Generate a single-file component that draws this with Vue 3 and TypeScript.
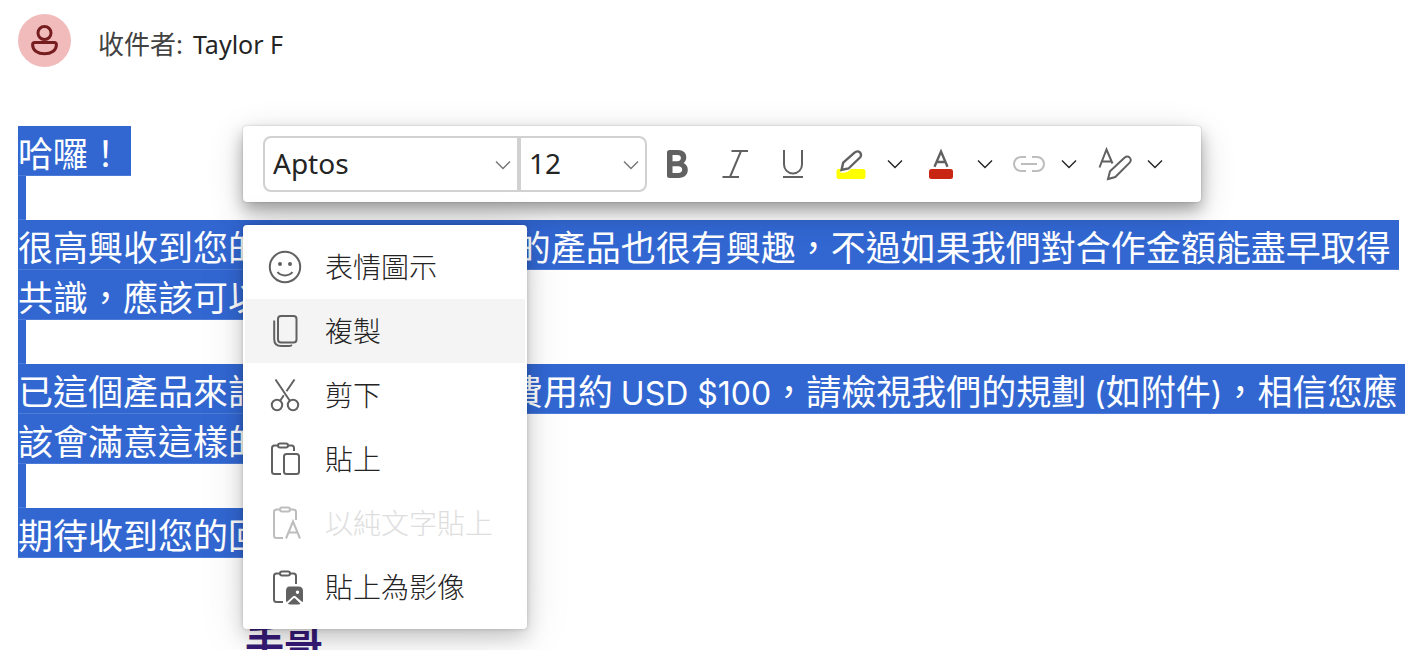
<script setup lang="ts">
import { ref } from 'vue'

interface Run {
  text: string
  latin?: boolean
}

interface MenuEntry {
  icon: string
  label: string
  disabled?: boolean
}

const fontName = ref<string>('Aptos')
const fontSize = ref<string>('12')
const hovered = ref<string>('複製')

const lines: Run[][] = [
  [{ text: '哈囉！ ' }],
  [],
  [{ text: '很高興收到您的來信， 您對我們的產品也很有興趣，不過如果我們對合作金額能盡早取得 ' }],
  [{ text: '共識，應該可以加快合作。 ' }],
  [],
  [
    { text: '已這個產品來討論，每個月的總費用約 ' },
    { text: 'USD $100', latin: true },
    { text: '，請檢視我們的規劃 ' },
    { text: '(', latin: true },
    { text: '如附件' },
    { text: ')', latin: true },
    { text: '，相信您應 ' },
  ],
  [{ text: '該會滿意這樣的安排。 ' }],
  [],
  [{ text: '期待收到您的回覆。 ' }],
]

const entries: MenuEntry[] = [
  { icon: 'emoji', label: '表情圖示' },
  { icon: 'copy', label: '複製' },
  { icon: 'cut', label: '剪下' },
  { icon: 'paste', label: '貼上' },
  { icon: 'text', label: '以純文字貼上', disabled: true },
  { icon: 'image', label: '貼上為影像' },
]
</script>

<template>
  <main class="compose" lang="zh-Hant">
    <header class="recipients">
      <span class="avatar">
        <svg viewBox="0 0 53 53" aria-hidden="true">
          <circle cx="26.5" cy="19" r="6.5" />
          <path d="M16.800 28.500h19.400q2.200 0 2.200 2.200c0 6-5.600 9-11.900 9s-11.900-3-11.900-9q0-2.200 2.200-2.200z" />
        </svg>
      </span>
      <span class="to">收件者:</span>
      <span class="name">Taylor F</span>
    </header>

    <section class="message">
      <p v-for="(line, i) in lines" :key="i" class="line" :class="{ empty: !line.length }">
        <span v-for="(run, j) in line" :key="j" :class="{ latin: run.latin }">{{ run.text }}</span>
      </p>
    </section>
    <p class="signature">手哥</p>

    <div class="toolbar" role="toolbar" aria-label="格式">
      <label class="field family">
        <select v-model="fontName" aria-label="字型">
          <option>Aptos</option>
          <option>Arial</option>
        </select>
        <svg class="chevron" viewBox="0 0 16 10" aria-hidden="true"><path d="M1 1.500l7 7 7-7" /></svg>
      </label>
      <label class="field size">
        <select v-model="fontSize" aria-label="字型大小">
          <option>12</option>
          <option>14</option>
        </select>
        <svg class="chevron" viewBox="0 0 16 10" aria-hidden="true"><path d="M1 1.500l7 7 7-7" /></svg>
      </label>

      <button class="tool" type="button" aria-label="粗體">
        <svg viewBox="0 0 36 36" aria-hidden="true">
          <path class="fill" fill-rule="evenodd" d="M10.500 4H19c5.200 0 8.300 3 8.300 7.300 0 2.400-1 4.500-2.700 5.700 2.700 1.300 4.200 3.700 4.200 6.800 0 5-3.600 8.200-9 8.200h-9.300Q8 32 8 29.500v-23Q8 4 10.500 4zM13.500 9v6.300h5c2.200 0 3.400-1.200 3.400-3.200S20.700 9 18.500 9zM13.500 20.200V27h5.800c2.500 0 3.900-1.300 3.900-3.400s-1.400-3.400-3.900-3.400z" />
        </svg>
      </button>
      <button class="tool" type="button" aria-label="斜體">
        <svg viewBox="0 0 36 36" aria-hidden="true"><path d="M14.500 5H31M5.500 31H22M24 5L13 31" /></svg>
      </button>
      <button class="tool" type="button" aria-label="底線">
        <svg viewBox="0 0 36 36" aria-hidden="true"><path d="M9 4v14.500a9 9 0 0 0 18 0V4M8 31h20" /></svg>
      </button>
      <span class="split">
        <button class="tool" type="button" aria-label="醒目提示色彩">
          <svg viewBox="0 0 36 36" aria-hidden="true">
            <path class="yellow" d="M5.500 23H8l-1 3.500c5 1 8-.3 11-3.500h12q2.500 0 2.500 2.500v5q0 2.500-2.500 2.500H6q-2.500 0-2.500-2.500V25q0-2 2-2z" />
            <path class="thick" d="M8.500 24l1.700-7.300L21.800 6.500a3.600 3.600 0 0 1 5.200 5L15.500 22.500z" />
          </svg>
        </button>
        <button class="more" type="button" aria-label="更多醒目提示色彩">
          <svg class="chevron" viewBox="0 0 16 10" aria-hidden="true"><path d="M1 1.500l7 7 7-7" /></svg>
        </button>
      </span>
      <span class="split color">
        <button class="tool" type="button" aria-label="字型色彩">
          <svg viewBox="0 0 36 36" aria-hidden="true">
            <path class="thick" d="M11.500 20.800L18 5.500l6.500 15.300M13.600 16h8.800" />
            <rect class="red" x="6" y="23" width="24" height="10" rx="2.500" />
          </svg>
        </button>
        <button class="more" type="button" aria-label="更多字型色彩">
          <svg class="chevron" viewBox="0 0 16 10" aria-hidden="true"><path d="M1 1.500l7 7 7-7" /></svg>
        </button>
      </span>
      <span class="split link">
        <button class="tool" type="button" disabled aria-label="插入連結">
          <svg viewBox="0 0 36 36" aria-hidden="true">
            <path d="M15 11h-5a7 7 0 0 0 0 14h5M21 11h5a7 7 0 0 1 0 14h-5M10 18h16" />
          </svg>
        </button>
        <button class="more" type="button" aria-label="連結選項">
          <svg class="chevron" viewBox="0 0 16 10" aria-hidden="true"><path d="M1 1.500l7 7 7-7" /></svg>
        </button>
      </span>
      <span class="split styles">
        <button class="tool" type="button" aria-label="樣式">
          <svg viewBox="0 0 36 36" aria-hidden="true">
            <path d="M2.500 21.500L9.500 3.500l6 14M4.700 15.500h9.500M11 33l2-7.800L27.700 11.600a3.500 3.500 0 0 1 5 5L18.300 31z" />
          </svg>
        </button>
        <button class="more" type="button" aria-label="更多樣式">
          <svg class="chevron" viewBox="0 0 16 10" aria-hidden="true"><path d="M1 1.500l7 7 7-7" /></svg>
        </button>
      </span>
    </div>

    <div class="menu" role="menu">
      <button
        v-for="entry in entries"
        :key="entry.label"
        class="entry"
        :class="{ active: hovered === entry.label }"
        type="button"
        role="menuitem"
        :disabled="entry.disabled"
        @mouseenter="hovered = entry.label"
      >
        <svg viewBox="0 0 36 36" aria-hidden="true">
          <template v-if="entry.icon === 'emoji'">
            <circle cx="18" cy="18" r="15.200" />
            <circle class="fill" cx="13" cy="15" r="2" />
            <circle class="fill" cx="23" cy="15" r="2" />
            <path d="M10.500 23c3.500 4.500 11.500 4.500 15 0" />
          </template>
          <template v-else-if="entry.icon === 'copy'">
            <rect x="11" y="3" width="18.500" height="26.500" rx="3" />
            <path d="M7.200 7.500V26q0 7 7 7h7.300q2 0 3.500-1" />
          </template>
          <template v-else-if="entry.icon === 'cut'">
            <circle cx="10" cy="28" r="5.200" />
            <circle cx="26" cy="28" r="5.200" />
            <path d="M8.500 2.500l14.500 21.500M13 24l3.800-5.800M19.500 14.300L27.500 2.500" />
          </template>
          <template v-else-if="entry.icon === 'paste'">
            <rect x="11" y="2.500" width="10" height="4" rx="2" />
            <rect x="17" y="13" width="15" height="20" rx="2.500" />
            <path d="M11 4.500H7.500Q5 4.500 5 7v23.500Q5 33 7.500 33H14M21 4.500h3.500Q27 4.500 27 7v3" />
          </template>
          <template v-else-if="entry.icon === 'text'">
            <rect x="13" y="2.500" width="10" height="4" rx="2" />
            <path d="M13 4.500H9.500Q7 4.500 7 7v23.500Q7 33 9.500 33H16M23 4.500h3.500Q29 4.500 29 7v8M19 33.500l7-17 7 17M21.500 27.500h9" />
          </template>
          <template v-else>
            <rect x="13" y="2.500" width="10" height="4" rx="2" />
            <path d="M13 4.500H9.500Q7 4.500 7 7v23.500Q7 33 9.500 33H16M23 4.500h3.500Q29 4.500 29 7v8" />
            <path class="fill" fill-rule="evenodd" d="M22.500 17.500h9q4.500 0 4.500 4.500v9q0 1.300-.5 2.200l-7-6q-1.200-1-2.400 0l-6.500 6q-.6-1-.6-2.200v-9q0-4.500 3.500-4.500zM30.500 21.500a1.700 1.700 0 1 0 .01 0z" />
            <path class="fill" d="M20.800 34.800l5.900-5.500q.6-.5 1.200 0l5.700 5.500q-1 .7-2.200.7h-8.400q-1 0-2.200-.7z" />
          </template>
        </svg>
        <span>{{ entry.label }}</span>
      </button>
    </div>
  </main>
</template>

<style>
body {
  margin: 0;
  background: #fff;
  overflow: hidden;
}
</style>

<style scoped>
.compose {
  position: relative;
  height: 100vh;
  box-sizing: border-box;
  overflow: hidden;
  padding: 14px 18px 0;
  background: #fff;
  font-family: 'Noto Sans', 'Noto Sans CJK TC', sans-serif;
  color: #242424;
}

svg {
  display: block;
  fill: none;
  stroke: currentColor;
  stroke-width: 2;
}

svg .fill {
  fill: currentColor;
  stroke: none;
}

svg .thick {
  stroke-width: 2.4;
}

.recipients {
  display: flex;
  align-items: center;
  height: 53px;
  margin-bottom: 59px;
  font-size: 26px;
  line-height: 36px;
}

.avatar {
  width: 53px;
  height: 53px;
  margin-right: 27px;
  border-radius: 50%;
  background: #f1bbbc;
  color: #751d1f;
}

.avatar svg {
  stroke-width: 3;
}

.to,
.name {
  margin-top: 6px;
}

.to {
  margin-right: 10px;
  color: #424242;
}

.name {
  font-size: 25px;
}

.message {
  font-family: 'Noto Sans CJK TC', sans-serif;
  font-size: 35px;
  color: #fff;
}

.line {
  width: fit-content;
  height: 50px;
  margin: 0;
  border-bottom: 1px solid #4d7cd8;
  box-sizing: border-box;
  background: #3267d2;
  line-height: 51px;
  white-space: pre;
}

.line.empty {
  width: 8px;
  height: 44px;
}

.latin {
  font-family: Inter, sans-serif;
  font-size: 32px;
}

.signature {
  margin: 62px 0 0 227px;
  font-family: 'Noto Sans CJK TC', sans-serif;
  font-size: 39px;
  font-weight: 700;
  line-height: 40px;
  color: #371a78;
}

.toolbar {
  position: absolute;
  top: 126px;
  left: 243px;
  display: flex;
  align-items: center;
  box-sizing: border-box;
  height: 76px;
  padding: 0 18px 0 20px;
  border-radius: 4px;
  background: #fff;
  box-shadow: 0 0 2px rgba(0, 0, 0, 0.24), 0 8px 16px rgba(0, 0, 0, 0.3), 0 10px 36px rgba(0, 0, 0, 0.16);
  color: #616161;
}

.field {
  position: relative;
  display: block;
  height: 56px;
}

.family {
  width: 256px;
}

.size {
  width: 128px;
  margin-right: 12px;
}

.field select {
  width: 100%;
  height: 100%;
  padding: 0 8px 2px;
  border: 2px solid #d1d1d1;
  border-radius: 8px 0 0 8px;
  outline: none;
  appearance: none;
  background: #fff;
  color: #242424;
  font-family: 'Noto Sans', sans-serif;
  font-size: 28px;
}

.size select {
  border-radius: 0 8px 8px 0;
}

.chevron {
  width: 16px;
  height: 10px;
  stroke-width: 1.4;
}

.field .chevron {
  position: absolute;
  top: 24px;
  right: 8px;
  color: #757575;
  pointer-events: none;
}

.tool,
.more {
  display: grid;
  place-items: center;
  height: 56px;
  padding: 0;
  border: 0;
  background: none;
  color: inherit;
}

.tool {
  width: 36px;
  margin-right: 22px;
}

.tool svg {
  width: 36px;
  height: 36px;
}

.split {
  display: flex;
  margin-right: 18px;
}

.split .tool {
  margin-right: 16px;
}

.more {
  width: 20px;
  color: #242424;
}

.split.color {
  margin-right: 16px;
}

.link .tool,
.styles .tool {
  margin-right: 12px;
}

.tool:disabled {
  color: #bdbdbd;
}

svg .yellow {
  fill: #ff0;
  stroke: none;
}

svg .red {
  fill: #c82613;
  stroke: none;
}

.menu {
  position: absolute;
  top: 225px;
  left: 243px;
  box-sizing: border-box;
  width: 284px;
  padding: 10px 2px;
  border-radius: 4px;
  background: #fff;
  box-shadow: 0 0 4px rgba(0, 0, 0, 0.18), 0 8px 20px rgba(0, 0, 0, 0.18), 0 8px 48px rgba(0, 0, 0, 0.1);
}

.entry {
  display: flex;
  align-items: center;
  gap: 22px;
  width: 100%;
  height: 64px;
  padding: 0 22px;
  border: 0;
  background: none;
  color: #242424;
  font-family: 'Noto Sans CJK TC', sans-serif;
  font-size: 28px;
  font-weight: 300;
  text-align: left;
}

.entry span {
  padding-bottom: 2px;
}

.entry.active {
  background: #f4f4f4;
}

.entry svg {
  width: 36px;
  height: 36px;
  color: #616161;
}

.entry:disabled {
  color: #dedede;
}

.entry:disabled svg {
  color: #bdbdbd;
}
</style>
